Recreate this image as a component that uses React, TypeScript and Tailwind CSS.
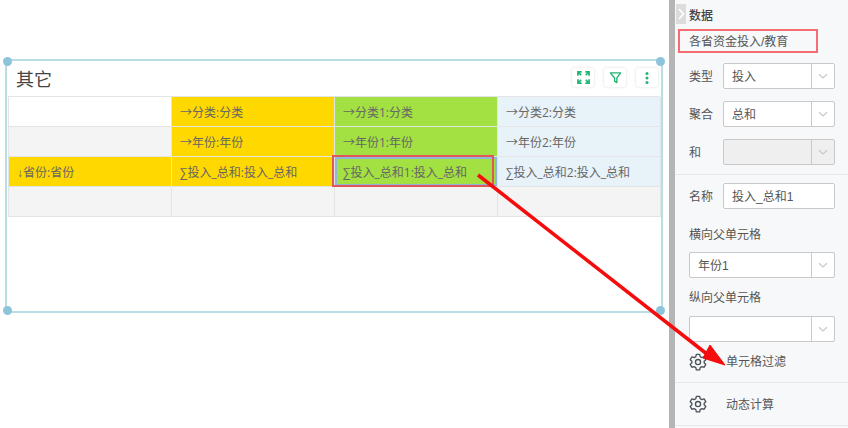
import React from "react";

const F = { fontFamily: '"Liberation Sans", "Noto Sans CJK SC", sans-serif' };

function Chevron() {
  return (
    <svg width="12" height="7" viewBox="0 0 12 7" fill="none" stroke="#c4c8cc" strokeWidth="1.2">
      <path d="M2 1.200 L6 5 L10 1.200" />
    </svg>
  );
}

function Select({ value, wide, disabled }: { value?: string; wide?: boolean; disabled?: boolean }) {
  return (
    <div className={`flex h-[26px] rounded-[2px] border border-[#c9c9c9] ${wide ? "w-[146px]" : "w-[112px]"} ${disabled ? "bg-[#efefef]" : "bg-white"}`}>
      <div className="flex-1 pl-[8px] pt-[1px] text-[12px] leading-[24px] text-[#555]">{value}</div>
      <div className="flex w-[23px] items-center justify-center border-l border-[#c9c9c9]">
        <Chevron />
      </div>
    </div>
  );
}

function Field({ label, children, className = "" }: { label: string; children: React.ReactNode; className?: string }) {
  return (
    <div className={`flex h-[26px] items-center pl-[14px] ${className}`}>
      <div className="w-[34px] pt-[2px] text-[12px] text-[#555]">{label}</div>
      {children}
    </div>
  );
}

function Gear() {
  return (
    <svg width="18" height="18" viewBox="0 0 24 24" fill="none" stroke="#4d5259" strokeWidth="1.800" strokeLinejoin="round">
      <circle cx="12" cy="12" r="3.400" />
      <path d="M9.800 1.800h4.400l.7 3 2.300 1.300 3-.9 2.200 3.800-2.200 2.100v2l2.200 2.100-2.200 3.800-3-.9-2.300 1.300-.7 3H9.800l-.7-3-2.300-1.300-3 .9-2.200-3.800 2.200-2.100v-2L1.600 9l2.200-3.800 3 .9 2.300-1.300z" />
    </svg>
  );
}

function Cell({ children, bg, className = "" }: { children?: React.ReactNode; bg: string; className?: string }) {
  return (
    <div className={`flex h-[30px] items-center border-b border-r border-[#e2e4e6] pl-[8px] pt-[2px] font-['Open_Sans','Noto_Sans_CJK_SC',sans-serif] text-[12px] text-[#666] ${bg} ${className}`}>
      <span>{children}</span>
    </div>
  );
}

function IconBtn({ children }: { children: React.ReactNode }) {
  return (
    <div className="flex h-[19px] w-[22px] items-center justify-center rounded-[3px] bg-white shadow-[0_0_3px_rgba(0,0,0,0.14)]">
      {children}
    </div>
  );
}

function Handle({ className }: { className: string }) {
  return <div className={`absolute h-[9px] w-[9px] rounded-full bg-[#8cc5da] ${className}`} />;
}

export default function App() {
  return (
    <div className="relative flex h-[428px] w-[848px] overflow-hidden bg-white" style={F}>
      <div className="w-[669px] shrink-0 pl-[5px] pt-[59px]">
        <div className="relative h-[254px] w-[658px] border-2 border-[#b9dfe6] pl-[1px]">
          <Handle className="-left-[4px] -top-[4px]" />
          <Handle className="-right-[4px] -top-[4px]" />
          <Handle className="-bottom-[4px] -left-[4px]" />
          <Handle className="-bottom-[4px] -right-[4px]" />
          <div className="flex h-[35px] items-center justify-between pb-[2px] pl-[8px] pr-[3px]">
            <span className="pt-[4px] text-[18px] leading-none text-[#444]">其它</span>
            <div className="flex gap-[10px]">
              <IconBtn>
                <svg width="13" height="13" viewBox="0 0 14 14" fill="none" stroke="#22b573" strokeWidth="1.800">
                  <path d="M1 5V1h4M9 1h4v4M13 9v4H9M5 13H1V9M1.500 1.500l3 3M12.500 1.500l-3 3M12.500 12.500l-3-3M1.500 12.500l3-3" />
                </svg>
              </IconBtn>
              <IconBtn>
                <svg width="13" height="13" viewBox="0 0 14 14" fill="none" stroke="#22b573" strokeWidth="1.500" strokeLinejoin="round">
                  <path d="M1.500 2h11L8.500 7.500V12.500L6 11V7.500z" />
                </svg>
              </IconBtn>
              <IconBtn>
                <svg width="4" height="12" viewBox="0 0 4 12" fill="#22b573">
                  <circle cx="2" cy="1.500" r="1.500" />
                  <circle cx="2" cy="6" r="1.500" />
                  <circle cx="2" cy="10.500" r="1.500" />
                </svg>
              </IconBtn>
            </div>
          </div>
          <div className="grid w-[652px] grid-cols-[163px_163px_163px_163px] border-l border-t border-[#e2e4e6]">
            <Cell bg="bg-white" />
            <Cell bg="bg-[#ffd800]">→分类:分类</Cell>
            <Cell bg="bg-[#a3e041]">→分类1:分类</Cell>
            <Cell bg="bg-[#e8f2f9]">→分类2:分类</Cell>
            <Cell bg="bg-[#f4f4f4]" />
            <Cell bg="bg-[#ffd800]">→年份:年份</Cell>
            <Cell bg="bg-[#a3e041]">→年份1:年份</Cell>
            <Cell bg="bg-[#e8f2f9]">→年份2:年份</Cell>
            <Cell bg="bg-[#ffd800]"><span className="font-['Liberation_Sans']">↓</span>省份:省份</Cell>
            <Cell bg="bg-[#ffd800]">∑投入_总和:投入_总和</Cell>
            <Cell bg="bg-[#a3e041]" className="relative">
              <div className="absolute inset-0 border-2 border-[#8fb8d8]" />
              <div className="absolute -left-[3px] -top-[2px] -bottom-[1px] right-[3px] border-2 border-[#e0565b]" />
              ∑投入_总和1:投入_总和
            </Cell>
            <Cell bg="bg-[#e8f2f9]">∑投入_总和2:投入_总和</Cell>
            <Cell bg="bg-[#f4f4f4]" />
            <Cell bg="bg-[#f4f4f4]" />
            <Cell bg="bg-[#f4f4f4]" />
            <Cell bg="bg-[#f4f4f4]" />
          </div>
        </div>
      </div>

      <div className="h-full w-[6px] shrink-0 bg-[#b5b5b5]" />

      <div className="h-full flex-1 bg-[#f7f8fa]">
        <div className="flex h-[29px] items-start pt-[4px]">
          <div className="ml-[1px] flex h-[20px] w-[10px] items-center justify-center bg-[#dcdcdc]">
            <svg width="7" height="12" viewBox="0 0 7 12" fill="none" stroke="#fff" strokeWidth="1.600">
              <path d="M1 1l4.500 5L1 11" />
            </svg>
          </div>
          <span className="ml-[3px] pt-[1px] text-[12px] font-medium leading-[22px] text-[#444]">数据</span>
        </div>
        <div className="ml-[3px] h-[24px] w-[140px] border-2 border-[#f56c72] pl-[9px] pt-[1px] text-[12px] leading-[20px] text-[#555]">
          各省资金投入/教育
        </div>
        <Field label="类型" className="mt-[10px]"><Select value="投入" /></Field>
        <Field label="聚合" className="mt-[12px]"><Select value="总和" /></Field>
        <Field label="和" className="mt-[12px]"><Select disabled /></Field>
        <div className="mt-[9px] h-px w-full bg-[#e8e9eb]" />
        <Field label="名称" className="mt-[8px]">
          <div className="h-[26px] w-[112px] rounded-[2px] border border-[#c9c9c9] bg-white pl-[8px] pt-[1px] text-[12px] leading-[24px] text-[#555]">投入_总和1</div>
        </Field>
        <div className="mt-[17px] pl-[14px] text-[12px] leading-[18px] text-[#555]">横向父单元格</div>
        <div className="mt-[8px] pl-[14px]"><Select value="年份1" wide /></div>
        <div className="mt-[11px] pl-[14px] text-[12px] leading-[18px] text-[#555]">纵向父单元格</div>
        <div className="mt-[9px] pl-[14px]"><Select wide /></div>
        <div className="flex h-[41px] items-center border-b border-[#e8e9eb] pl-[14px]">
          <Gear />
          <span className="ml-[19px] text-[12px] text-[#555]">单元格过滤</span>
        </div>
        <div className="flex h-[43px] items-center border-b border-[#e8e9eb] pl-[14px]">
          <Gear />
          <span className="ml-[19px] pt-[1px] text-[12px] text-[#555]">动态计算</span>
        </div>
      </div>

      <svg className="pointer-events-none absolute left-0 top-0" width="848" height="428" fill="none">
        <path d="M478 175 L712 358" stroke="#f50c0c" strokeWidth="3.500" />
        <path d="M725 365 L703 358 L710 345 Z" fill="#f50c0c" stroke="#f50c0c" />
      </svg>
    </div>
  );
}
